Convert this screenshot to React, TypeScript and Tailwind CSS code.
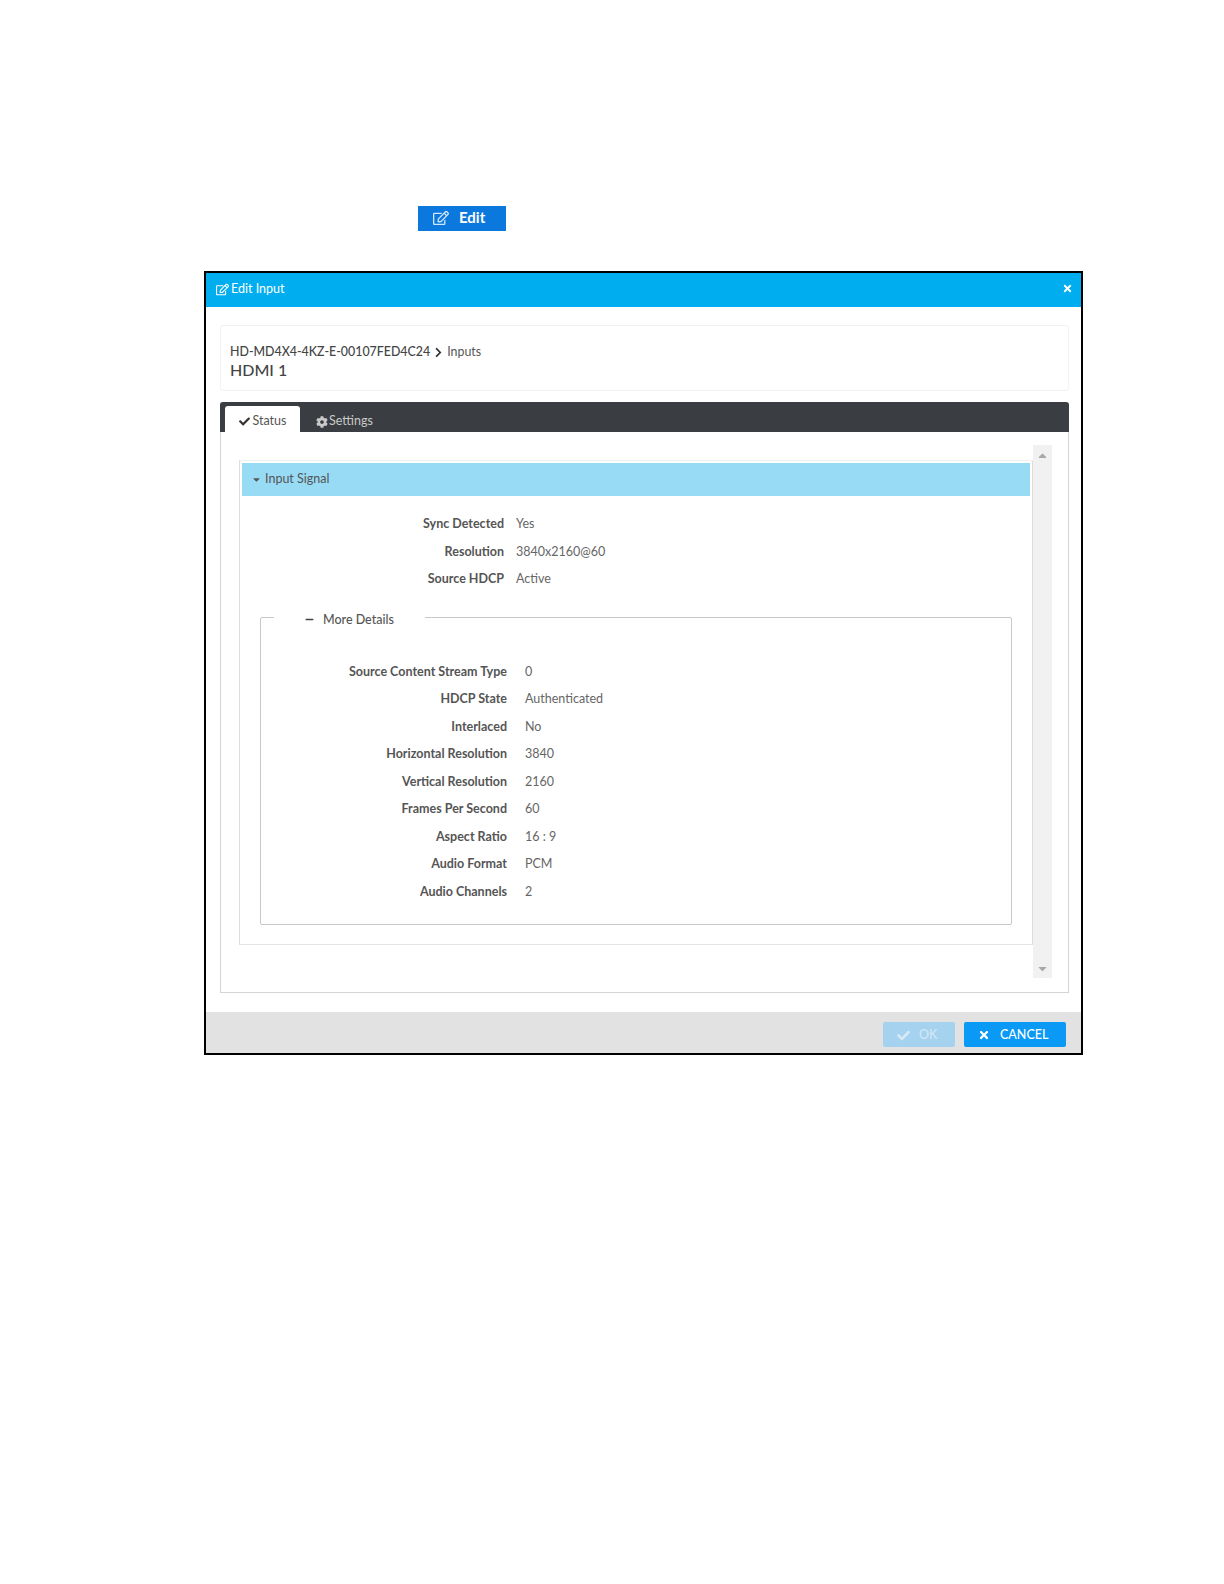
import { FaRegEdit, FaCheck, FaCog, FaTimes, FaChevronRight, FaCaretDown, FaCaretUp, FaMinus } from "react-icons/fa";

const SIGNAL = [
  ["Sync Detected", "Yes"],
  ["Resolution", "3840x2160@60"],
  ["Source HDCP", "Active"],
];

const DETAILS = [
  ["Source Content Stream Type", "0"],
  ["HDCP State", "Authenticated"],
  ["Interlaced", "No"],
  ["Horizontal Resolution", "3840"],
  ["Vertical Resolution", "2160"],
  ["Frames Per Second", "60"],
  ["Aspect Ratio", "16 : 9"],
  ["Audio Format", "PCM"],
  ["Audio Channels", "2"],
];

function Row({ label, value, labelWidth, gap }: { label: string; value: string; labelWidth: string; gap: string }) {
  return (
    <div className={`flex items-center h-[27.5px] text-[12.5px] ${gap}`}>
      <div className={`${labelWidth} text-right font-bold text-[#555]`}>{label}</div>
      <div className="text-[#666]">{value}</div>
    </div>
  );
}

export default function App() {
  return (
    <div className="w-[1224px] h-[1584px] bg-white pt-[206px] font-['Lato','Open_Sans',sans-serif]">
      {/* Inline button from the manual text */}
      <div className="ml-[418px] w-[88px] h-[25px] bg-[#0a78dc] text-white flex items-center pl-[15px] pb-[2px] gap-[10px] text-[15px] font-bold">
        <FaRegEdit className="w-[16px] h-[16px] text-[#cfe6fb]" />
        <span>Edit</span>
      </div>

      {/* Dialog */}
      <div className="mt-[40px] ml-[204px] w-[879px] h-[784px] border-2 border-black flex flex-col">
        <div className="h-[34px] shrink-0 bg-[#00aeef] text-white flex items-center justify-between pl-[10px] pr-[8px] pb-[1px] text-[12.5px]">
          <div className="flex items-center gap-[2px]">
            <FaRegEdit className="w-[13px] h-[13px]" />
            <span>Edit Input</span>
          </div>
          <FaTimes className="w-[11px] h-[11px] -translate-y-[1px]" />
        </div>

        <div className="flex-1 min-h-0 pl-[14px] pr-[12px] pt-[18px]">
          <div className="h-[66px] border border-[#f2f2f2] rounded-[3px] pl-[9px] pt-[18px]">
            <div className="flex items-center text-[12.4px] leading-[16px] text-[#444]">
              <span className="font-medium">HD-MD4X4-4KZ-E-00107FED4C24</span>
              <FaChevronRight className="w-[11px] h-[11px] mx-[3px] text-[#333]" />
              <span className="text-[#555]">Inputs</span>
            </div>
            <div className="text-[16px] leading-[20px] text-[#444] font-medium">HDMI 1</div>
          </div>

          <div className="mt-[11px] h-[591px] border border-[#d4d4d4] border-t-0 rounded-t-[3px] flex flex-col">
            <div className="h-[30px] shrink-0 -mx-px bg-[#3a3d41] rounded-t-[3px] flex items-end pl-[5px] text-[12.5px]">
              <div className="w-[75px] h-[26px] pt-[5px] bg-white rounded-t-[3px] flex items-center justify-center gap-[3px] text-[#555]">
                <FaCheck className="w-[11px] h-[11px] text-[#333]" />
                <span>Status</span>
              </div>
              <div className="ml-[16px] h-[26px] pt-[5px] flex items-center gap-[1px] text-[#c9c9c9]">
                <FaCog className="w-[12px] h-[12px]" />
                <span>Settings</span>
              </div>
            </div>

            <div className="flex pl-[18px] pt-[13px]">
              <div className="w-[794px] pt-[15px]">
                <div className="h-[485px] border border-t-[#eee] border-x-[#ddd] border-b-[#e4e4e4] px-[2px] pt-[2px]">
                  <div className="h-[33px] bg-[#98dbf5] flex items-center pl-[9px] gap-[3px] text-[12.5px] text-[#555]">
                    <FaCaretDown className="w-[11px] h-[11px]" />
                    <span>Input Signal</span>
                  </div>

                  <div className="pt-[15px]">
                    {SIGNAL.map(([k, v]) => (
                      <Row key={k} label={k} value={v} labelWidth="w-[262px]" gap="gap-[12px]" />
                    ))}
                  </div>

                  <fieldset className="mt-[18px] mx-[18px] h-[313px] border border-[#c8c8c8] rounded-[2px] pl-0">
                    <legend className="ml-[13px] w-[151px] h-[12px] flex items-center pl-[31px] gap-[9px] text-[12.5px] text-[#555] font-medium">
                      <FaMinus className="w-[9px] h-[9px] translate-y-[2px] text-[#444]" />
                      <span className="translate-y-[3px]">More Details</span>
                    </legend>
                    <div className="pt-[35px]">
                      {DETAILS.map(([k, v]) => (
                        <Row key={k} label={k} value={v} labelWidth="w-[246px]" gap="gap-[18px]" />
                      ))}
                    </div>
                  </fieldset>
                </div>
              </div>

              <div className="w-[19px] h-[533px] bg-[#f1f1f1] flex flex-col items-center justify-between pt-[4px] pb-[3px] text-[#a8a8a8]">
                <FaCaretUp className="w-[13px] h-[13px]" />
                <FaCaretDown className="w-[13px] h-[13px]" />
              </div>
            </div>
          </div>
        </div>

        <div className="h-[41px] shrink-0 bg-[#e2e2e2] flex items-start justify-end gap-[9px] pt-[10px] pr-[15px] text-[12.5px] text-white">
          <div className="w-[72px] h-[25px] pt-[1px] bg-[#a5d2ee] rounded-[2px] flex items-center pl-[14px] gap-[9px] text-[#d5e9f6]">
            <FaCheck className="w-[13px] h-[13px]" />
            <span>OK</span>
          </div>
          <div className="w-[102px] h-[25px] pt-[1px] bg-[#0a99f5] rounded-[2px] flex items-center pl-[14px] gap-[10px] font-medium">
            <FaTimes className="w-[12px] h-[12px]" />
            <span>CANCEL</span>
          </div>
        </div>
      </div>
    </div>
  );
}
